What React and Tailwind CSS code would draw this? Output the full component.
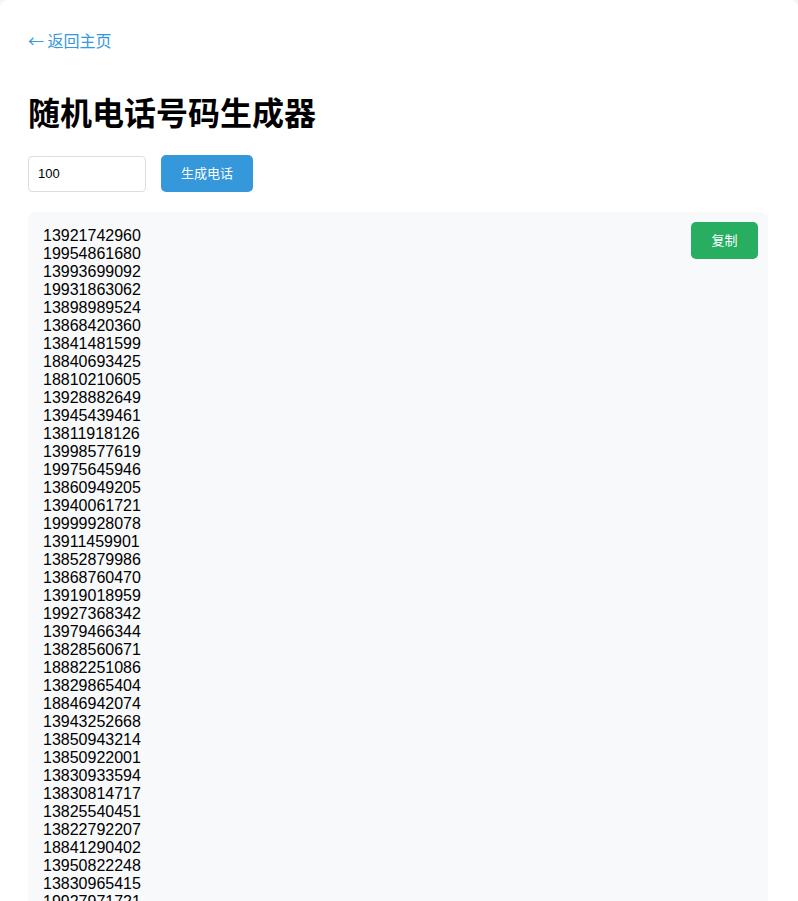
import React, { useState } from "react";

// numbers shown in the result panel
const visible = [
  "13921742960", "19954861680", "13993699092", "19931863062", "13898989524",
  "13868420360", "13841481599", "18840693425", "18810210605", "13928882649",
  "13945439461", "13811918126", "13998577619", "19975645946", "13860949205",
  "13940061721", "19999928078", "13911459901", "13852879986", "13868760470",
  "13919018959", "19927368342", "13979466344", "13828560671", "18882251086",
  "13829865404", "18846942074", "13943252668", "13850943214", "13850922001",
  "13830933594", "13830814717", "13825540451", "13822792207", "18841290402",
  "13950822248", "13830965415", "19927971721",
];

const makeMore = (count) => {
  const prefixes = ["138", "139", "188", "199"];
  let seed = 7;
  const out = [];
  for (let i = 0; i < count; i++) {
    let n = prefixes[i % 4];
    for (let j = 0; j < 8; j++) {
      seed = (seed * 9301 + 49297) % 233280;
      n += Math.floor((seed / 233280) * 10);
    }
    out.push(n);
  }
  return out;
};

const phones = [...visible, ...makeMore(100 - visible.length)];

const App = () => {
  const [count, setCount] = useState("100");

  return (
    <div className="min-h-screen bg-[#f5f5f5] font-['Liberation_Sans','Noto_Sans_CJK_SC',sans-serif]">
      <div className="max-w-[800px] mx-auto bg-white rounded-lg pl-7 pr-[30px] pt-7 pb-7">
        <a href="#" className="block text-[#3498db] text-base leading-6 font-['Noto_Sans_CJK_SC',sans-serif]">
          ← 返回主页
        </a>

        <h1 className="mt-[42px] text-[32px] leading-[40px] font-bold text-black">
          随机电话号码生成器
        </h1>

        <div className="mt-[21px] flex items-center gap-[15px]">
          <input
            type="number"
            value={count}
            onChange={(e) => setCount(e.target.value)}
            className="w-[118px] h-[36px] border border-[#ddd] rounded px-[9px] text-[13px] text-black outline-none"
          />
          <button className="h-[37px] px-5 bg-[#3498db] text-white text-[13px] rounded-[5px]">
            生成电话
          </button>
        </div>

        <div className="relative mt-5 bg-[#f8f9fa] rounded-lg p-[15px]">
          <button className="absolute top-[10px] right-[10px] h-[37px] w-[67px] bg-[#27ae60] text-white text-[13px] rounded-[5px]">
            复制
          </button>
          <div className="text-base leading-[18px] text-black font-['Liberation_Sans',sans-serif]">
            {phones.map((p, i) => (
              <div key={i}>{p}</div>
            ))}
          </div>
        </div>
      </div>
    </div>
  );
};

export default App;
